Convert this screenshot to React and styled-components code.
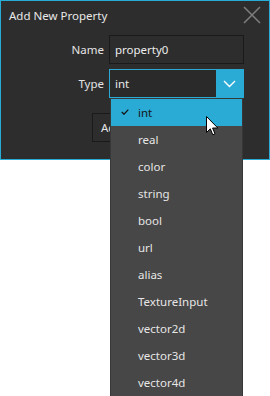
import styled, { createGlobalStyle } from "styled-components";

const ACCENT = "#29abd6";

const GlobalStyle = createGlobalStyle`
	html, body {
		margin: 0;
		padding: 0;
		background: #ffffff;
	}

	body {
		font-family: "Noto Sans", "Open Sans", sans-serif;
		font-size: 11.5px;
	}
`;

const Page = styled.div`
	width: 270px;
	height: 396px;
	background: #ffffff;
	overflow: hidden;
`;

const Dialog = styled.div`
	box-sizing: border-box;
	width: 270px;
	height: 160px;
	border: 1px solid ${ACCENT};
	background: #2d2d2d;
	color: #e4e4e4;
`;

const TitleBar = styled.div`
	display: flex;
	align-items: center;
	justify-content: space-between;
	height: 29px;
	padding: 0 8px 0 8px;

	& > .title {
		font-size: 11.5px;
		color: #e8e8e8;
		margin-top: 0;
	}
`;

const CloseButton = styled.div`
	display: flex;
	align-items: center;
	justify-content: center;
	width: 20px;
	height: 20px;
	margin-right: -1px;
	margin-top: -1px;
`;

const Form = styled.div`
	display: grid;
	grid-template-columns: 103px 135px;
	grid-auto-rows: 29px;
	column-gap: 5px;
	row-gap: 5px;
	margin-top: 5px;
`;

const Label = styled.label`
	display: flex;
	align-items: center;
	justify-content: flex-end;
	color: #e4e4e4;
`;

const TextField = styled.div`
	box-sizing: border-box;
	display: flex;
	align-items: center;
	padding-left: 5px;
	border: 1px solid #1a1a1a;
	background: #2d2d2d;
	color: #ececec;
`;

const SelectWrap = styled.div`
	position: relative;
`;

const SelectBox = styled.div`
	box-sizing: border-box;
	display: flex;
	height: 29px;
	border: 1px solid ${ACCENT};
	background: #2a2a2a;

	& > .value {
		flex: 1;
		display: flex;
		align-items: center;
		padding-left: 5px;
		color: #ececec;
	}
`;

const Caret = styled.div`
	display: flex;
	align-items: center;
	justify-content: center;
	width: 27px;
	background: ${ACCENT};
`;

const Menu = styled.ul`
	position: absolute;
	top: 100%;
	left: 1px;
	right: 1px;
	margin: 0;
	padding: 0;
	list-style: none;
	border: 1px solid #383838;
	border-bottom: none;
	background: #474747;
	z-index: 2;
`;

const MenuItem = styled.li`
	position: relative;
	display: flex;
	align-items: center;
	height: 27px;
	padding-left: 27px;
	color: ${({ $active }) => ($active ? "#151515" : "#e6e6e6")};
	background: ${({ $active }) => ($active ? ACCENT : "transparent")};

	& > .check {
		position: absolute;
		left: 10px;
		top: 10px;
	}
`;

const Actions = styled.div`
	display: flex;
	gap: 6px;
	margin-top: 15px;
	padding-left: 91px;
`;

const Button = styled.div`
	box-sizing: border-box;
	display: flex;
	align-items: center;
	width: 70px;
	height: 29px;
	padding-left: 8px;
	border: 1px solid #1a1a1a;
	background: #2d2d2d;
	color: #e4e4e4;
`;

const Cursor = styled.svg`
	position: absolute;
	left: 206px;
	top: 116px;
	z-index: 3;
`;

const TYPES = [
	"int",
	"real",
	"color",
	"string",
	"bool",
	"url",
	"alias",
	"TextureInput",
	"vector2d",
	"vector3d",
	"vector4d",
];

export default function App() {
	const selected = "int";

	return (
		<Page>
			<GlobalStyle />
			<Dialog>
				<TitleBar>
					<span className={"title"}>Add New Property</span>
					<CloseButton>
						<svg width="18" height="18" viewBox="0 0 18 18">
							<path
								d="M1 1 L17 17 M17 1 L1 17"
								stroke="#7c7c7c"
								strokeWidth="1.6"
								fill="none"
							/>
						</svg>
					</CloseButton>
				</TitleBar>

				<Form>
					<Label>Name</Label>
					<TextField>property0</TextField>

					<Label>Type</Label>
					<SelectWrap>
						<SelectBox>
							<span className={"value"}>{selected}</span>
							<Caret>
								<svg width="13" height="8" viewBox="0 0 13 8">
									<path
										d="M1 1 L6.5 6.5 L12 1"
										stroke="#ffffff"
										strokeWidth="1.4"
										fill="none"
									/>
								</svg>
							</Caret>
						</SelectBox>

						<Menu>
							{TYPES.map((type) => (
								<MenuItem key={type} $active={type === selected}>
									{type === selected && (
										<svg className={"check"} width="8" height="6" viewBox="0 0 8 6">
											<path
												d="M0.7 3 L3 5.2 L7.3 0.6"
												stroke="#151515"
												strokeWidth="1.3"
												fill="none"
											/>
										</svg>
									)}
									{type}
								</MenuItem>
							))}
						</Menu>
					</SelectWrap>
				</Form>

				<Actions>
					<Button>Add</Button>
					<Button>Cancel</Button>
				</Actions>
			</Dialog>

			<Cursor width="13" height="21" viewBox="0 0 13 21">
				<path
					d="M0.5 0.5 L0.5 16.5 L4.3 12.8 L6.8 18.8 L9 17.9 L6.6 12 L11.8 12 Z"
					fill="#ffffff"
					stroke="#000000"
					strokeWidth="1"
					strokeLinejoin="miter"
				/>
			</Cursor>
		</Page>
	);
}
